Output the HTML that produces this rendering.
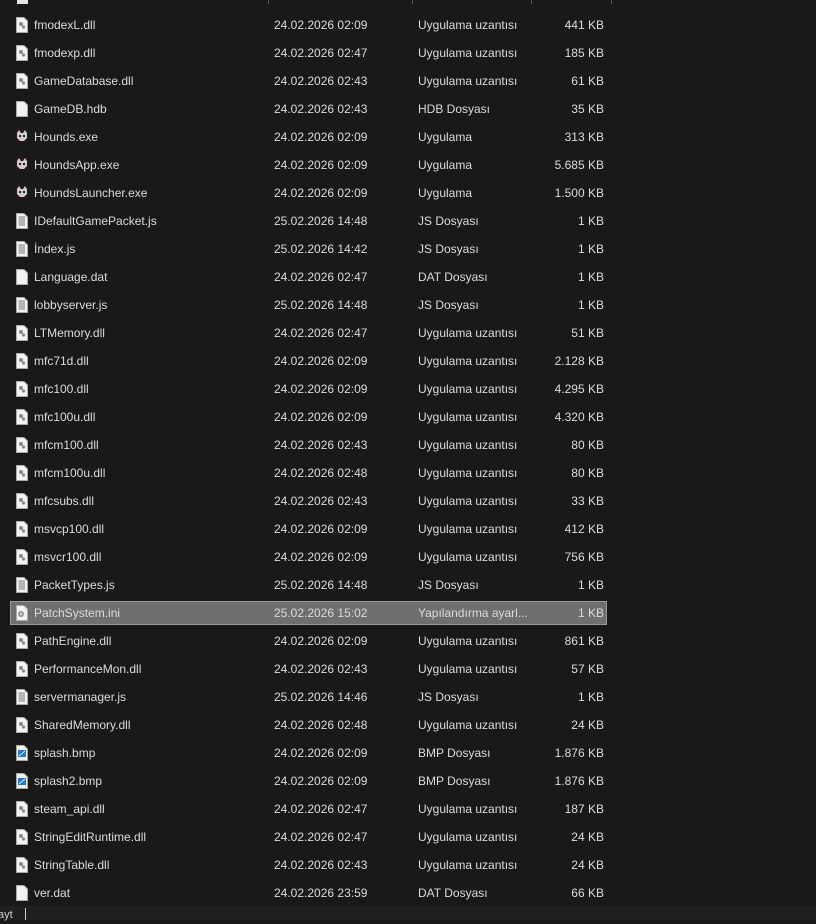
<!DOCTYPE html>
<html><head><meta charset="utf-8"><style>
body{margin:0;width:816px;height:920px;background:#191919;font-family:"Liberation Sans",sans-serif;font-size:12px;color:#dcdcdc;position:relative;overflow:hidden}
.r{position:absolute;left:10px;width:597px;height:24px;line-height:24px}
.r span{position:absolute;top:0;white-space:nowrap}
.n{left:24px}.d{left:264px}.t{left:408px}.s{right:3px}
.sel{background:#6f6f6f;border:1px solid #9a9a9a;box-sizing:border-box;left:10px}
.sel span{top:-1px;margin-left:-1px}
.sel .s{margin-right:-1px}
.sel .ic{left:5px;top:3px}
.ic{position:absolute;left:6px;top:4px;width:12px;height:16px}
.bot{position:absolute;left:0;top:906px;width:816px;height:14px;background:#202020;font-size:11px;line-height:18px;color:#ccc}
.div{position:absolute;top:0;width:1px;height:4px;background:#555}
</style></head><body>
<div style="position:absolute;left:17px;top:0;width:11px;height:4px;background:#e8e8e8"></div>
<div class="div" style="left:268px"></div><div class="div" style="left:412px"></div><div class="div" style="left:531px"></div><div class="div" style="left:611px"></div>
<svg width="0" height="0" style="position:absolute">
<defs>
<g id="doc"><path d="M0.5 0.5H8L11.5 4V15.5H0.5Z" fill="#f2f2f2" stroke="#aaa"/></g>
<g id="dll"><use href="#doc"/><circle cx="5" cy="7" r="2" fill="#888"/><circle cx="7.5" cy="10" r="1.6" fill="#888"/></g>
<g id="txt"><use href="#doc"/><path d="M2.5 4H9M2.5 6H9M2.5 8H9M2.5 10H9M2.5 12H9" stroke="#777" stroke-width="1"/></g>
<g id="bmp"><use href="#doc"/><rect x="2" y="5" width="8" height="7" fill="#2a76c8"/><path d="M3 11L9 6" stroke="#bfe" /></g>
<g id="exe"><rect x="-1" y="1" width="14" height="13" fill="#2a1616"/><path d="M1 4L3 1L5 4H7L9 1L11 4V9L8 12H4L1 9Z" fill="#ccc"/><rect x="3" y="6" width="2" height="2" fill="#222"/><rect x="7" y="6" width="2" height="2" fill="#222"/></g>
<g id="ini"><use href="#doc"/><circle cx="5" cy="9" r="3" fill="#999"/><circle cx="5" cy="9" r="1" fill="#eee"/></g>
</defs></svg>
<div id="rows"></div>
<script>
var d=[
["dll","fmodexL.dll","24.02.2026 02:09","Uygulama uzantısı","441 KB"],
["dll","fmodexp.dll","24.02.2026 02:47","Uygulama uzantısı","185 KB"],
["dll","GameDatabase.dll","24.02.2026 02:43","Uygulama uzantısı","61 KB"],
["doc","GameDB.hdb","24.02.2026 02:43","HDB Dosyası","35 KB"],
["exe","Hounds.exe","24.02.2026 02:09","Uygulama","313 KB"],
["exe","HoundsApp.exe","24.02.2026 02:09","Uygulama","5.685 KB"],
["exe","HoundsLauncher.exe","24.02.2026 02:09","Uygulama","1.500 KB"],
["txt","IDefaultGamePacket.js","25.02.2026 14:48","JS Dosyası","1 KB"],
["txt","İndex.js","25.02.2026 14:42","JS Dosyası","1 KB"],
["doc","Language.dat","24.02.2026 02:47","DAT Dosyası","1 KB"],
["txt","lobbyserver.js","25.02.2026 14:48","JS Dosyası","1 KB"],
["dll","LTMemory.dll","24.02.2026 02:47","Uygulama uzantısı","51 KB"],
["dll","mfc71d.dll","24.02.2026 02:09","Uygulama uzantısı","2.128 KB"],
["dll","mfc100.dll","24.02.2026 02:09","Uygulama uzantısı","4.295 KB"],
["dll","mfc100u.dll","24.02.2026 02:09","Uygulama uzantısı","4.320 KB"],
["dll","mfcm100.dll","24.02.2026 02:43","Uygulama uzantısı","80 KB"],
["dll","mfcm100u.dll","24.02.2026 02:48","Uygulama uzantısı","80 KB"],
["dll","mfcsubs.dll","24.02.2026 02:43","Uygulama uzantısı","33 KB"],
["dll","msvcp100.dll","24.02.2026 02:09","Uygulama uzantısı","412 KB"],
["dll","msvcr100.dll","24.02.2026 02:09","Uygulama uzantısı","756 KB"],
["txt","PacketTypes.js","25.02.2026 14:48","JS Dosyası","1 KB"],
["ini","PatchSystem.ini","25.02.2026 15:02","Yapılandırma ayarl...","1 KB"],
["dll","PathEngine.dll","24.02.2026 02:09","Uygulama uzantısı","861 KB"],
["dll","PerformanceMon.dll","24.02.2026 02:43","Uygulama uzantısı","57 KB"],
["txt","servermanager.js","25.02.2026 14:46","JS Dosyası","1 KB"],
["dll","SharedMemory.dll","24.02.2026 02:48","Uygulama uzantısı","24 KB"],
["bmp","splash.bmp","24.02.2026 02:09","BMP Dosyası","1.876 KB"],
["bmp","splash2.bmp","24.02.2026 02:09","BMP Dosyası","1.876 KB"],
["dll","steam_api.dll","24.02.2026 02:47","Uygulama uzantısı","187 KB"],
["dll","StringEditRuntime.dll","24.02.2026 02:47","Uygulama uzantısı","24 KB"],
["dll","StringTable.dll","24.02.2026 02:43","Uygulama uzantısı","24 KB"],
["doc","ver.dat","24.02.2026 23:59","DAT Dosyası","66 KB"]];
var h="";
d.forEach(function(r,i){
h+='<div class="r'+(i==21?' sel':'')+'" style="top:'+(13+28*i)+'px"><svg class="ic" viewBox="0 0 12 16"><use href="#'+r[0]+'"/></svg><span class="n">'+r[1]+'</span><span class="d">'+r[2]+'</span><span class="t">'+r[3]+'</span><span class="s">'+r[4]+'</span></div>';
});
document.getElementById("rows").innerHTML=h;
</script>
<div class="bot"><span style="position:absolute;left:-2px;top:0">ayt</span><span style="position:absolute;left:25px;top:2px;width:1px;height:12px;background:#ccc"></span></div>
</body></html>
